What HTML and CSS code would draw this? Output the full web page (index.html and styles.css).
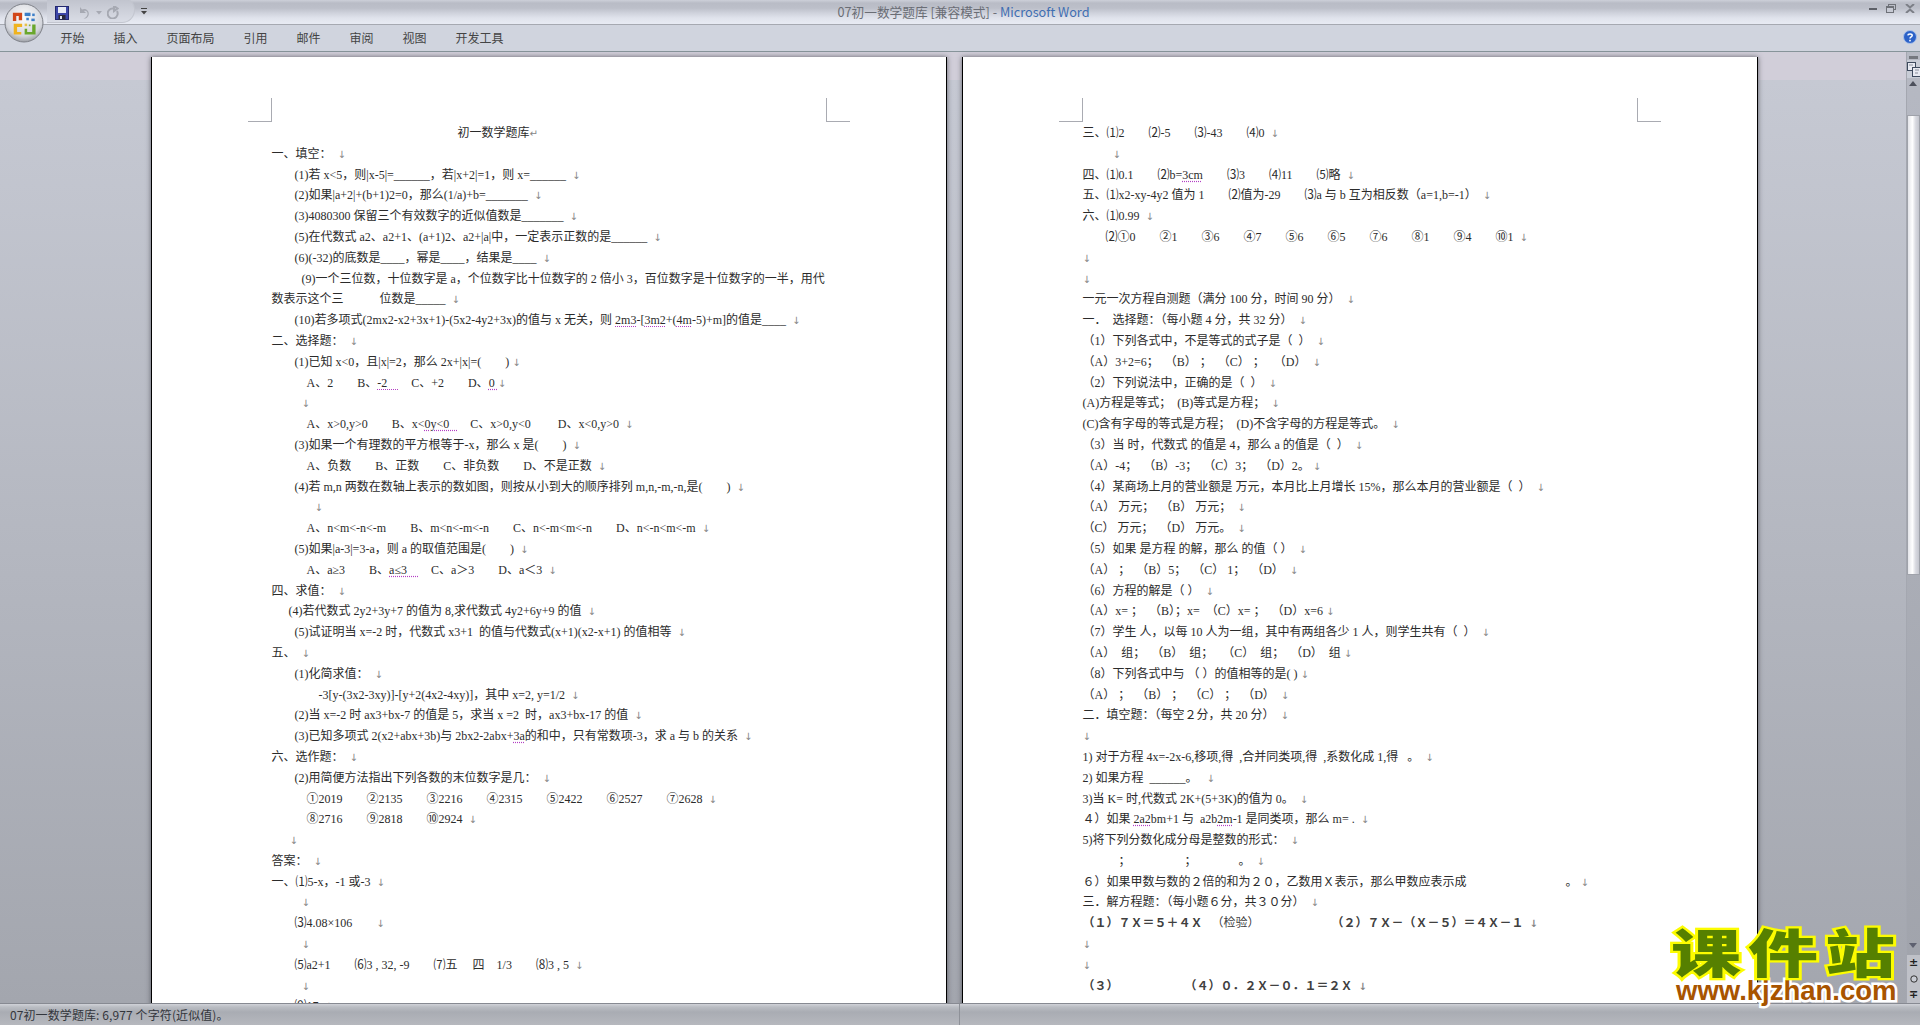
FILE: index.html
```html
<!DOCTYPE html>
<html lang="zh-CN">
<head>
<meta charset="utf-8">
<title>07初一数学题库 [兼容模式] - Microsoft Word</title>
<link rel="stylesheet" href="styles.css">
</head>
<body>
<div class="app">
  <header class="titlebar">
    <div class="qat">
      <svg class="qi" width="14" height="14" viewBox="0 0 14 14"><rect x=".5" y=".5" width="13" height="13" fill="#3c46a8" stroke="#23286e"/><rect x="3" y="1" width="8" height="6" fill="#e8ecf6"/><rect x="3.5" y="9" width="7" height="4.5" fill="#2a2a3a"/><rect x="5" y="10" width="2" height="3" fill="#dfe3ee"/></svg>
      <svg class="qi undo" width="12" height="13" viewBox="0 0 12 13"><path d="M3 1v6h6L7 5c2-1 4 1 3.500 3.500C10 11 8 12 6.500 12.500 11 13 13 8 11 5 9.500 2.500 6.500 2.500 5 3.500Z" fill="#a6a9b2"/></svg>
      <svg class="qi dd" width="6" height="4" viewBox="0 0 6 4"><path d="M0 0h6L3 3.500Z" fill="#a6a9b2"/></svg>
      <svg class="qi redo" width="12" height="13" viewBox="0 0 12 13"><path d="M6 2.500a5 5 0 1 0 4 2.500M7 0v5l3.500-2.500Z" fill="none" stroke="#a6a9b2" stroke-width="2"/></svg>
      <svg class="qcust" width="7" height="7" viewBox="0 0 7 7"><path d="M0 0h6v1H0ZM0 3h6L3 6.500Z" fill="#444"/></svg>
    </div>
    <div class="doc-title">07初一数学题库 [兼容模式] - <span class="appname">Microsoft Word</span></div>
    <div class="winctl">
      <svg width="8" height="3" viewBox="0 0 8 3"><rect width="8" height="2" y="1" fill="#5d6068"/></svg>
      <svg width="10" height="9" viewBox="0 0 10 9"><rect x="2.500" y=".5" width="7" height="5" fill="none" stroke="#6e7178"/><rect x=".5" y="2.500" width="7" height="6" fill="#c7cad4" stroke="#6e7178"/><rect x="1" y="3" width="6" height="1" fill="#6e7178"/></svg>
      <svg width="10" height="9" viewBox="0 0 10 9"><path d="M1 0l4 3.500L9 0M1 9l4-3.500L9 9" fill="none" stroke="#7c7f87" stroke-width="2"/></svg>
    </div>
  </header>
  <nav class="tabs">
    <span class="tab">开始</span><span class="tab">插入</span><span class="tab">页面布局</span><span class="tab">引用</span><span class="tab">邮件</span><span class="tab">审阅</span><span class="tab">视图</span><span class="tab">开发工具</span>
    <svg class="help" width="14" height="14" viewBox="0 0 14 14"><circle cx="7" cy="7" r="6.500" fill="#2c62c8" stroke="#a9c0ea"/><path d="M4.800 5.300C5 3.600 9.200 3.400 9.200 5.500 9.200 7 7 6.800 7 8.600" fill="none" stroke="#fff" stroke-width="1.500"/><rect x="6.200" y="9.800" width="1.600" height="1.600" fill="#fff"/></svg>
  </nav>
  <main class="workspace">
    <div class="pages">
      <article class="page">
        <i class="crop tl"></i><i class="crop tr"></i>
        <p class="l title">初一数学题库<i class="m">↵</i></p>
        <p class="l">一、填空：  <i class="m">↓</i></p>
        <p class="l i1">(1)若 x&lt;5，则|x-5|=______，若|x+2|=1，则 x=______  <i class="m">↓</i></p>
        <p class="l i1">(2)如果|a+2|+(b+1)2=0，那么(1/a)+b=_______  <i class="m">↓</i></p>
        <p class="l i1">(3)4080300 保留三个有效数字的近似值数是_______  <i class="m">↓</i></p>
        <p class="l i1">(5)在代数式 a2、a2+1、(a+1)2、a2+|a|中，一定表示正数的是______  <i class="m">↓</i></p>
        <p class="l i1">(6)(-32)的底数是____，幂是____，结果是____  <i class="m">↓</i></p>
        <p class="l i3">(9)一个三位数，十位数字是 a，个位数字比十位数字的 2 倍小 3，百位数字是十位数字的一半，用代</p>
        <p class="l">数表示这个三            位数是_____  <i class="m">↓</i></p>
        <p class="l i1">(10)若多项式(2mx2-x2+3x+1)-(5x2-4y2+3x)的值与 x 无关，则 <u>2m3</u>-[<u>3m2</u>+(<u>4m</u>-5)+m]的值是____  <i class="m">↓</i></p>
        <p class="l">二、选择题：  <i class="m">↓</i></p>
        <p class="l i1">(1)已知 x&lt;0，且|x|=2，那么 2x+|x|=(        ) <i class="m">↓</i></p>
        <p class="l i2">A、2        B、<u>-2    </u>    C、+2        D、<u>0 </u><i class="m">↓</i></p>
        <p class="l i2b"><i class="m">↓</i></p>
        <p class="l i2">A、x&gt;0,y&gt;0        B、x&lt;<u>0y&lt;0   </u>    C、x&gt;0,y&lt;0         D、x&lt;0,y&gt;0  <i class="m">↓</i></p>
        <p class="l i1">(3)如果一个有理数的平方根等于-x，那么 x 是(        )  <i class="m">↓</i></p>
        <p class="l i2">A、负数        B、正数        C、非负数        D、不是正数  <i class="m">↓</i></p>
        <p class="l i1">(4)若 m,n 两数在数轴上表示的数如图，则按从小到大的顺序排列 m,n,-m,-n,是(        )  <i class="m">↓</i></p>
        <p class="l i2c"><i class="m">↓</i></p>
        <p class="l i2">A、n&lt;m&lt;-n&lt;-m        B、m&lt;n&lt;-m&lt;-n        C、n&lt;-m&lt;m&lt;-n        D、n&lt;-n&lt;m&lt;-m  <i class="m">↓</i></p>
        <p class="l i1">(5)如果|a-3|=3-a，则 a 的取值范围是(        )  <i class="m">↓</i></p>
        <p class="l i2">A、a≥3        B、<u>a≤3    </u>    C、a＞3        D、a＜3  <i class="m">↓</i></p>
        <p class="l">四、求值：  <i class="m">↓</i></p>
        <p class="l i4">(4)若代数式 2y2+3y+7 的值为 8,求代数式 4y2+6y+9 的值  <i class="m">↓</i></p>
        <p class="l i1">(5)试证明当 x=-2 时，代数式 x3+1  的值与代数式(x+1)(x2-x+1) 的值相等  <i class="m">↓</i></p>
        <p class="l">五、  <i class="m">↓</i></p>
        <p class="l i1">(1)化简求值：  <i class="m">↓</i></p>
        <p class="l i5">-3[y-(3x2-3xy)]-[y+2(4x2-4xy)]，其中 x=2, y=1/2  <i class="m">↓</i></p>
        <p class="l i1">(2)当 x=-2 时 ax3+bx-7 的值是 5，求当 x =2  时，ax3+bx-17 的值  <i class="m">↓</i></p>
        <p class="l i1">(3)已知多项式 2(x2+abx+3b)与 2bx2-2abx+<u>3a</u>的和中，只有常数项-3，求 a 与 b 的关系  <i class="m">↓</i></p>
        <p class="l">六、选作题：  <i class="m">↓</i></p>
        <p class="l i1">(2)用简便方法指出下列各数的末位数字是几：  <i class="m">↓</i></p>
        <p class="l i2">①2019        ②2135        ③2216        ④2315        ⑤2422        ⑥2527        ⑦2628  <i class="m">↓</i></p>
        <p class="l i2">⑧2716        ⑨2818        ⑩2924  <i class="m">↓</i></p>
        <p class="l i6"><i class="m">↓</i></p>
        <p class="l">答案：  <i class="m">↓</i></p>
        <p class="l">一、⑴5-x，-1 或-3  <i class="m">↓</i></p>
        <p class="l i2b"><i class="m">↓</i></p>
        <p class="l i1">⑶4.08×106        <i class="m">↓</i></p>
        <p class="l i2b"><i class="m">↓</i></p>
        <p class="l i1">⑸a2+1        ⑹3 , 32, -9        ⑺五     四    1/3        ⑻3 , 5  <i class="m">↓</i></p>
        <p class="l i2b"><i class="m">↓</i></p>
        <p class="l i1">⑼17  <i class="m">↓</i></p>
      </article>
      <article class="page">
        <i class="crop tl"></i><i class="crop tr"></i>
        <p class="l">三、⑴2        ⑵-5        ⑶-43        ⑷0  <i class="m">↓</i></p>
        <p class="l i2b"><i class="m">↓</i></p>
        <p class="l">四、⑴0.1        ⑵b=<u>3cm</u>        ⑶3        ⑷11        ⑸略  <i class="m">↓</i></p>
        <p class="l">五、⑴x2-xy-4y2 值为 1        ⑵值为-29        ⑶a 与 b 互为相反数（a=1,b=-1）  <i class="m">↓</i></p>
        <p class="l">六、⑴0.99  <i class="m">↓</i></p>
        <p class="l i1">⑵①0        ②1        ③6        ④7        ⑤6        ⑥5        ⑦6        ⑧1        ⑨4        ⑩1  <i class="m">↓</i></p>
        <p class="l"><i class="m">↓</i></p>
        <p class="l"><i class="m">↓</i></p>
        <p class="l">一元一次方程自测题（满分 100 分，时间 90 分）  <i class="m">↓</i></p>
        <p class="l">一．  选择题：（每小题 4 分，共 32 分）  <i class="m">↓</i></p>
        <p class="l">（1）下列各式中，不是等式的式子是（  ）  <i class="m">↓</i></p>
        <p class="l">（A）3+2=6；  （B） ；  （C） ；   （D）  <i class="m">↓</i></p>
        <p class="l">（2）下列说法中，正确的是（  ）  <i class="m">↓</i></p>
        <p class="l">(A)方程是等式；  (B)等式是方程；  <i class="m">↓</i></p>
        <p class="l">(C)含有字母的等式是方程；  (D)不含字母的方程是等式。  <i class="m">↓</i></p>
        <p class="l">（3）当 时，代数式 的值是 4，那么 a 的值是（  ）  <i class="m">↓</i></p>
        <p class="l">（A）-4；  （B）-3；  （C）3；  （D）2。 <i class="m">↓</i></p>
        <p class="l">（4）某商场上月的营业额是 万元，本月比上月增长 15%，那么本月的营业额是（  ）  <i class="m">↓</i></p>
        <p class="l">（A） 万元；  （B） 万元；  <i class="m">↓</i></p>
        <p class="l">（C） 万元；  （D） 万元。  <i class="m">↓</i></p>
        <p class="l">（5）如果 是方程 的解，那么 的值（ ）  <i class="m">↓</i></p>
        <p class="l">（A） ；  （B）5；  （C） 1；  （D）  <i class="m">↓</i></p>
        <p class="l">（6）方程的解是（ ）  <i class="m">↓</i></p>
        <p class="l">（A）x= ；  （B）；x=  （C）x= ；  （D）x=6 <i class="m">↓</i></p>
        <p class="l">（7）学生 人，以每 10 人为一组，其中有两组各少 1 人，则学生共有（  ）  <i class="m">↓</i></p>
        <p class="l">（A）  组；  （B）  组；   （C）  组；  （D）  组 <i class="m">↓</i></p>
        <p class="l">（8）下列各式中与 （ ）的值相等的是( ) <i class="m">↓</i></p>
        <p class="l">（A） ；  （B） ；  （C） ；  （D）  <i class="m">↓</i></p>
        <p class="l">二．填空题：（每空２分，共 20 分）  <i class="m">↓</i></p>
        <p class="l"><i class="m">↓</i></p>
        <p class="l">1) 对于方程 4x=-2x-6,移项,得  ,合并同类项,得  ,系数化成 1,得   。  <i class="m">↓</i></p>
        <p class="l">2) 如果方程  ______。   <i class="m">↓</i></p>
        <p class="l">3)当 K= 时,代数式 2K+(5+3K)的值为 0。  <i class="m">↓</i></p>
        <p class="l">４）如果 <u>2a2</u>bm+1 与  a2b<u>2m</u>-1 是同类项，那么 m= .  <i class="m">↓</i></p>
        <p class="l">5)将下列分数化成分母是整数的形式：  <i class="m">↓</i></p>
        <p class="l">            ；                  ；              。  <i class="m">↓</i></p>
        <p class="l">６）如果甲数与数的２倍的和为２０，乙数用Ｘ表示，那么甲数应表示成                                 。 <i class="m">↓</i></p>
        <p class="l">三．解方程题：（每小题６分，共３０分）  <i class="m">↓</i></p>
        <p class="l b">（１）７Ｘ＝５＋４Ｘ   <span class="n">（检验）</span>                        （２）７Ｘ－（Ｘ－５）＝４Ｘ－１  <i class="m">↓</i></p>
        <p class="l"><i class="m">↓</i></p>
        <p class="l"><i class="m">↓</i></p>
        <p class="l b">（３）                      （４）０．２Ｘ－０．１＝２Ｘ  <i class="m">↓</i></p>
      </article>
    </div>
    <aside class="scroll">
      <span class="split"></span>
      <span class="ruler"><svg width="14" height="15" viewBox="0 0 14 15"><rect x=".5" y=".5" width="8" height="8" fill="#e8eaf2" stroke="#3e4a5e"/><rect x="5.500" y="5.500" width="8" height="9" fill="#e8eaf2" stroke="#3e4a5e"/><path d="M2 3h4M8 8h4M8 11h3" stroke="#8a8f9c"/></svg></span>
      <span class="arrow up"></span>
      <span class="thumb"></span>
      <span class="track"></span>
      <span class="arrow down"></span>
      <span class="sbtn">±</span>
      <span class="sbtn"><svg width="8" height="8" viewBox="0 0 8 8"><circle cx="4" cy="4" r="3.200" fill="#c9ccd4" stroke="#333"/></svg></span>
      <span class="sbtn">∓</span>
    </aside>
  </main>
  <footer class="status"><span class="status-left">07初一数学题库: 6,977 个字符(近似值)。</span></footer>
  <div class="office">
    <svg width="40" height="40" viewBox="0 0 40 40">
      <defs><radialGradient id="orb" cx=".5" cy=".35" r=".7"><stop offset="0" stop-color="#fdfdfe"/><stop offset=".7" stop-color="#d4d6dc"/><stop offset="1" stop-color="#8c8f96"/></radialGradient></defs>
      <circle cx="20" cy="20" r="19" fill="url(#orb)" stroke="#7e8188"/>
      <g transform="translate(3 3) scale(.84)">
        <path d="M7 8h11v9h-4V12H11v6H7Z" fill="#d2471a"/>
        <path d="M21 8h7v4h-7Z" fill="#3d7fc8"/><rect x="30" y="9" width="3" height="3" fill="#3d7fc8"/><rect x="23" y="14" width="3" height="3" fill="#3d7fc8"/><rect x="29" y="15" width="4" height="3" fill="#3d7fc8"/>
        <path d="M8 21h10v4h-6v6h5v3H8Z" fill="#efb320"/>
        <path d="M21 27h3v4h6v-9h4v12H21Z" fill="#6aa72c"/>
        <rect x="21" y="21" width="3" height="3" fill="#e7c14a"/><rect x="26" y="22" width="2" height="2" fill="#7fae3c"/>
      </g>
    </svg>
  </div>
  <div class="mark">
    <div class="mark-cn">课件站</div>
    <div class="mark-url">www.kjzhan.com</div>
  </div>
</div>
</body>
</html>
```
FILE: styles.css
```css
* { box-sizing: border-box; }
html, body { margin: 0; height: 100%; overflow: hidden; }
body { font-family: "Noto Sans CJK SC", sans-serif; font-size: 12px; }
.app { position: relative; display: flex; flex-direction: column; height: 1025px; overflow: hidden; }

.titlebar {
  position: relative; display: flex; align-items: center; justify-content: center; height: 25px; flex: none;
  background: linear-gradient(#cdd0d9 0, #b9bcc6 3px, #bcbfc9 8px, #cfd2dc 13px, #e0e3ec 18px, #e8ebf3 24px);
  border-bottom: 1px solid #a6a9b1;
}
.qat {
  position: absolute; left: 47px; top: -3px; width: 88px; height: 26px; padding: 8px 0 0 8px;
  display: flex; align-items: flex-start;
  border: 1px solid #c3c6cf; border-left: 0; border-radius: 0 13px 13px 0;
  background: linear-gradient(#bfc2cc, #dadde6);
}
.qi { flex: none; margin-right: 8px; }
.qi.dd { margin: 5px 5px 0 -1px; }
.qcust { position: absolute; left: 94px; top: 10px; }
.doc-title { font-size: 12.7px; color: #6a6d75; line-height: 24px; padding-left: 7px; }
.appname { color: #3f6eb2; }
.winctl { position: absolute; right: 5px; top: 4px; display: flex; align-items: center; gap: 9px; }

.tabs {
  position: relative; display: flex; align-items: center; height: 27px; flex: none; padding-left: 46px;
  background: #d0d4de; border-bottom: 1px solid #87949a; color: #444;
}
.tab { padding: 0 14.5px; line-height: 24px; }
.help { position: absolute; right: 3px; top: 5px; }

.workspace {
  display: flex; flex: 1; min-height: 0;
  background: linear-gradient(#d1ced9 0, #d1ced9 28px, #c6c9d3 28px, #b3b6bf 55%, #a3a6ae 100%);
}
.pages { display: flex; flex: 1; gap: 15px; padding: 5px 0 0 151px; min-width: 0; }
.page {
  position: relative; flex: none; width: 796px; height: 1200px; padding: 66px 119.500px 0;
  background: #fff; border: solid #000; border-width: 0 1.500px;
  box-shadow: 0 0 5px rgba(60, 62, 70, .75);
  font-family: "Liberation Serif", "Noto Sans CJK SC", serif; color: #2b2b2b;
}
.l { margin: 0; height: 20.8px; line-height: 20.8px; white-space: pre; }
.title { padding-left: 186px; }
.i1 { padding-left: 23px; }
.i2 { padding-left: 35px; }
.i2b { padding-left: 30px; }
.i2c { padding-left: 43px; }
.i3 { padding-left: 30px; }
.i4 { padding-left: 17px; }
.i5 { padding-left: 47px; }
.i6 { padding-left: 18px; }
.m { font-style: normal; color: #858585; font-family: "DejaVu Sans", sans-serif; font-size: 10px; }
u { text-decoration: underline dotted #b33fc4; text-underline-offset: 2px; }
.b { font-weight: 700; color: #404040; }
.n { font-weight: 400; }
.crop { position: absolute; top: 41px; width: 24px; height: 24px; border: solid #a9abb2; border-width: 0 0 1px; }
.tl { left: 96px; border-right-width: 1px; }
.tr { right: 96px; border-left-width: 1px; }

.scroll {
  position: relative; flex: none; width: 14px; display: flex; flex-direction: column; align-items: center;
  background: linear-gradient(#b6b9c3, #a0a3ab); border-left: 1px solid #a4a7b0; color: #222;
}
.split { flex: none; width: 9px; height: 3px; margin: 4px 0 1px; background: #75787f; }
.ruler { flex: none; display: flex; align-items: center; justify-content: center; width: 14px; height: 18px; background: #c8ccd6; }
.arrow { flex: none; width: 13px; height: 18px; position: relative; }
.arrow::after { content: ""; position: absolute; left: 2px; width: 0; height: 0; border: solid transparent; border-width: 0 4.500px; }
.arrow.up { height: 37px; }
.arrow.up::after { top: 3px; border-bottom: 5px solid #4d505c; }
.arrow.down::after { top: 6px; border-top: 5px solid #5e6170; }
.thumb { flex: none; width: 13px; height: 460px; background: linear-gradient(90deg, #e4e5ea, #fff 40%, #d8d9e0 70%, #c5c7cf); border: 1px solid #9fa2aa; }
.track { flex: 1; }
.sbtn { flex: none; height: 16px; width: 14px; display: flex; align-items: center; justify-content: center; font: 700 11px/16px "DejaVu Sans", sans-serif; background: #bfc1c8; }

.status {
  height: 22px; flex: none; padding-left: 10px; line-height: 21px; color: #33363c; position: relative; z-index: 1;
  border-top: 1px solid #878a92;
  background: linear-gradient(#d0d2d8 0, #babdc3 3px, #a9acb3 8px, #b6b8be 100%);
}
.status-left { letter-spacing: .1px; }
.status::after { content: ""; position: absolute; left: 959px; top: 0; bottom: 0; width: 1px; background: #8e9198; }

.office { position: absolute; left: 4px; top: 3px; width: 40px; height: 40px; }
.mark { position: absolute; left: 1671px; top: 928px; width: 240px; z-index: 2; }
.mark-cn {
  font: 900 70px/46px "Noto Sans CJK SC", sans-serif; letter-spacing: 7px; color: #568000; white-space: nowrap;
  -webkit-text-stroke: 6px #fcfc00; paint-order: stroke fill; transform: scaleY(.74);
}
.mark-url {
  font: 700 27.500px/25px "Liberation Sans", sans-serif; color: #a85400; padding-left: 5px; margin-top: 4px; white-space: nowrap;
  -webkit-text-stroke: 5px #fff; paint-order: stroke fill;
}
```
